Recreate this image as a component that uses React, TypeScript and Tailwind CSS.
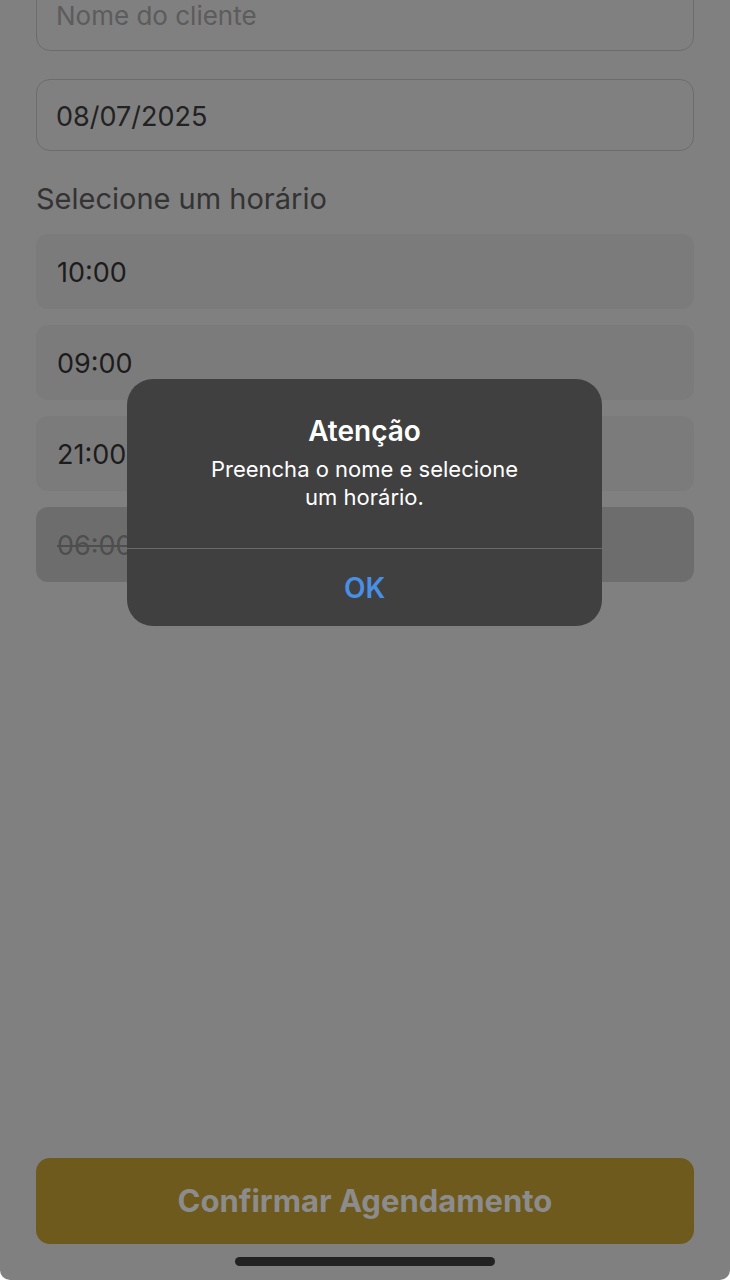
import React from "react";

const slots = [
  { id: 1, time: "10:00", disabled: false },
  { id: 2, time: "09:00", disabled: false },
  { id: 3, time: "21:00", disabled: false },
  { id: 4, time: "06:00", disabled: true },
];

const App = () => {
  return (
    <div
      className="bg-white w-[730px] h-[1280px]"
      style={{ fontFamily: "Inter, 'Noto Sans', sans-serif" }}
    >
      <div className="relative h-[1280px] bg-[#808080] rounded-b-[10px] overflow-hidden flex flex-col px-[36px]">
        {/* form */}
        <div className="-mt-[21px] h-[72px] rounded-[14px] border border-[#6c6c6c] flex items-center px-[19px]">
          <span className="text-[26px] text-[#5c5c5c]">Nome do cliente</span>
        </div>
        <div className="mt-[28px] h-[72px] rounded-[14px] border border-[#6c6c6c] flex items-center px-[19px] pt-[5px]">
          <span className="text-[27px] text-[#222222]">08/07/2025</span>
        </div>
        <p className="mt-[30px] text-[29px] leading-[36px] text-[#333333]">Selecione um horário</p>
        <div className="mt-[17px] flex flex-col gap-[16px]">
          {slots.map((slot) => (
            <div
              key={slot.id}
              className={
                slot.disabled
                  ? "h-[75px] rounded-[12px] bg-[#6d6d6d] flex items-center px-[21px] pt-[4px]"
                  : "h-[75px] rounded-[12px] bg-[#7b7b7b] flex items-center px-[21px] pt-[4px]"
              }
            >
              <span
                className={
                  slot.disabled
                    ? "text-[27px] text-[#4e4e4e] line-through"
                    : "text-[27px] text-[#1c1c1c]"
                }
              >
                {slot.time}
              </span>
            </div>
          ))}
        </div>

        <button className="mt-auto mb-[36px] h-[86px] rounded-[14px] bg-[#6f5a1d] flex items-center justify-center">
          <span className="text-[31px] font-bold text-[#8c8c8c]">Confirmar Agendamento</span>
        </button>

        {/* home indicator */}
        <div className="absolute left-[235px] bottom-[14px] w-[260px] h-[9px] rounded-full bg-[#222222]" />

        {/* alert */}
        <div className="absolute left-[127px] top-[379px] w-[475px] h-[247px] rounded-[26px] bg-[#404040] flex flex-col overflow-hidden">
          <div className="flex-1 flex flex-col items-center pt-[33px]">
            <p className="text-[28px] leading-[38px] font-semibold text-white">Atenção</p>
            <p className="mt-[5px] text-[22px] leading-[28px] text-white text-center">
              Preencha o nome e selecione
              <br />
              um horário.
            </p>
          </div>
          <div className="h-px bg-[#6a6a6a]" />
          <div className="h-[77px] flex items-center justify-center">
            <span className="text-[28px] font-semibold text-[#4a8fe6]">OK</span>
          </div>
        </div>
      </div>
    </div>
  );
};

export default App;
